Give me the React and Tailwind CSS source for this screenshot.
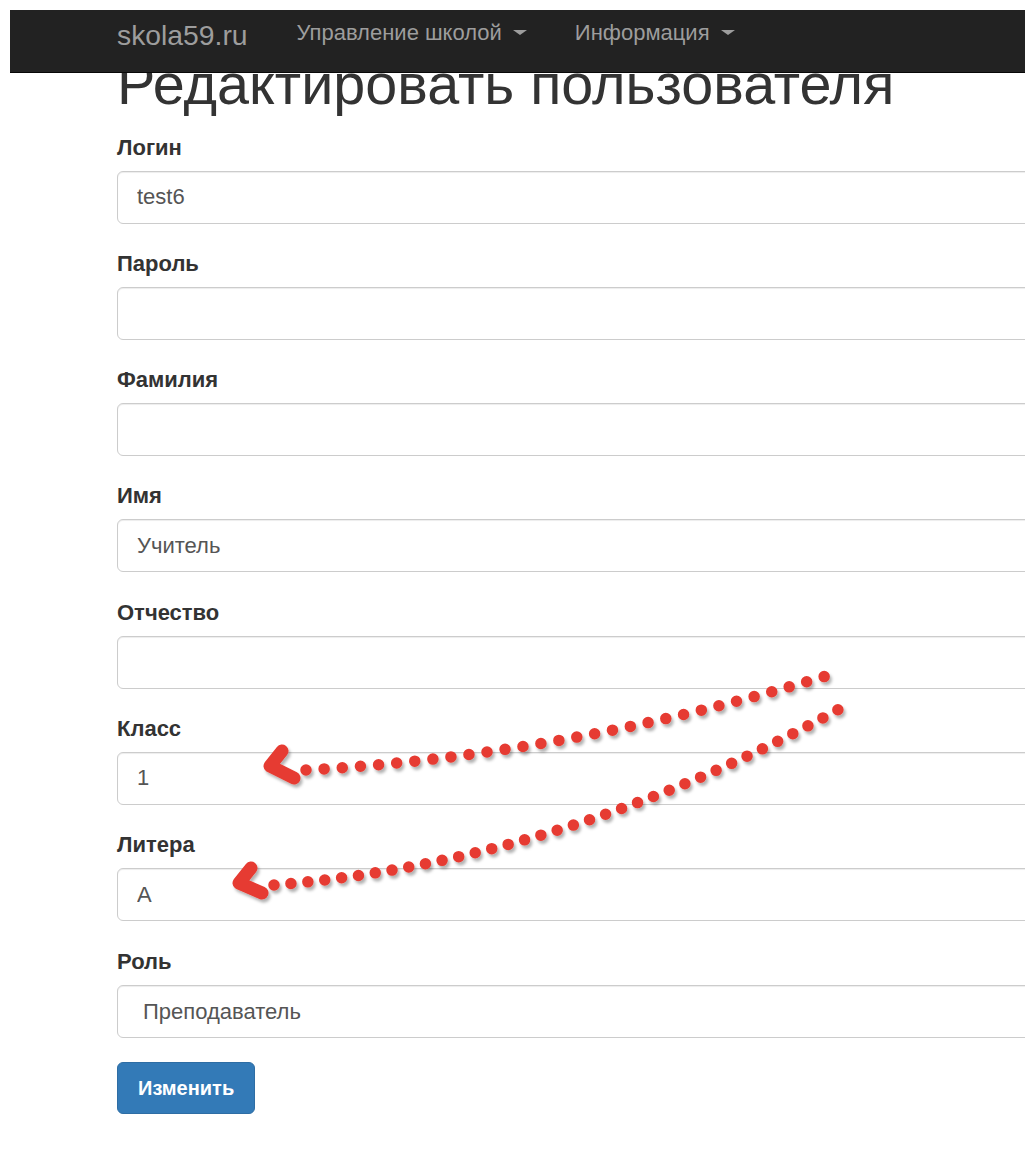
import React from "react";

const fields = [
  { label: "Логин", value: "test6" },
  { label: "Пароль", value: "", type: "password" },
  { label: "Фамилия", value: "" },
  { label: "Имя", value: "Учитель" },
  { label: "Отчество", value: "" },
  { label: "Класс", value: "1" },
  { label: "Литера", value: "А" },
];

const Caret = () => (
  <span className="ml-[11px] inline-block w-0 h-0 border-t-[5px] border-t-[#9d9d9d] border-x-[7px] border-x-transparent align-middle" />
);

const Navbar = () => (
  <div className="absolute top-[10px] left-[10px] right-0 h-[63px] bg-[#222] border-b border-[#080808] z-10">
    <div className="flex items-start pt-[9px] pl-[107px]">
      <a className="text-[28.3px] leading-[32px] text-[#9d9d9d]">skola59.ru</a>
      <a className="ml-[49px] mt-[-2px] text-[22px] leading-[31px] text-[#9d9d9d] flex items-center">
        Управление школой
        <Caret />
      </a>
      <a className="ml-[48px] mt-[-2px] text-[22px] leading-[31px] text-[#9d9d9d] flex items-center">
        Информация
        <Caret />
      </a>
    </div>
  </div>
);

// red dotted pointers over the Класс / Литера fields
const Arrows = () => (
  <svg
    className="absolute top-0 left-0 pointer-events-none z-20"
    width="1025"
    height="1162"
    viewBox="0 0 1025 1162"
  >
    <defs>
      <filter id="dotShadow" x="-10%" y="-10%" width="120%" height="130%">
        <feDropShadow dx="2" dy="3" stdDeviation="1.5" floodColor="#000" floodOpacity="0.3" />
      </filter>
    </defs>
    <g filter="url(#dotShadow)" fill="none" stroke="#e63a30" strokeLinecap="round" strokeLinejoin="round">
      <path d="M306 770 Q565 756 836 673" strokeWidth="11.5" strokeDasharray="0 18.2" />
      <polyline points="282,751 270,766 294,778" strokeWidth="13" />
      <path d="M274 885 Q563 862 841 708" strokeWidth="11.5" strokeDasharray="0 17" />
      <polyline points="251,868 239,883 262,893" strokeWidth="13" />
    </g>
  </svg>
);

const FormGroup = ({ label, children }) => (
  <div className="mb-[24.3px]">
    <label className="block text-[22px] leading-[31px] font-bold text-[#333] mb-[8px]">
      {label}
    </label>
    {children}
  </div>
);

const inputClass =
  "block w-[1000px] h-[53px] px-[19px] text-[22px] text-[#555] bg-white border border-[#ccc] rounded-[6px] shadow-[inset_0_1px_1px_rgba(0,0,0,0.075)] outline-none";

export default function App() {
  return (
    <div
      className="relative w-[1025px] min-h-[1162px] overflow-hidden bg-white"
      style={{ fontFamily: '"Liberation Sans", Arial, sans-serif' }}
    >
      <Navbar />
      <div className="pl-[117px]">
        <h1 className="mt-[53px] mb-[16px] text-[57.5px] leading-[1.087] font-normal text-[#333] whitespace-nowrap">
          Редактировать пользователя
        </h1>
        <form>
          {fields.map((f) => (
            <FormGroup key={f.label} label={f.label}>
              <input
                type={f.type || "text"}
                defaultValue={f.value}
                className={inputClass}
              />
            </FormGroup>
          ))}
          <FormGroup label="Роль">
            <select defaultValue="teacher" className={`${inputClass} appearance-none pl-[25px]`}>
              <option value="teacher">Преподаватель</option>
              <option value="student">Ученик</option>
              <option value="admin">Администратор</option>
            </select>
          </FormGroup>
          <button
            type="button"
            className="h-[52px] px-[20px] text-[20px] font-bold text-white bg-[#337ab7] border border-[#2e6da4] rounded-[6px]"
          >
            Изменить
          </button>
        </form>
      </div>
      <Arrows />
    </div>
  );
}
